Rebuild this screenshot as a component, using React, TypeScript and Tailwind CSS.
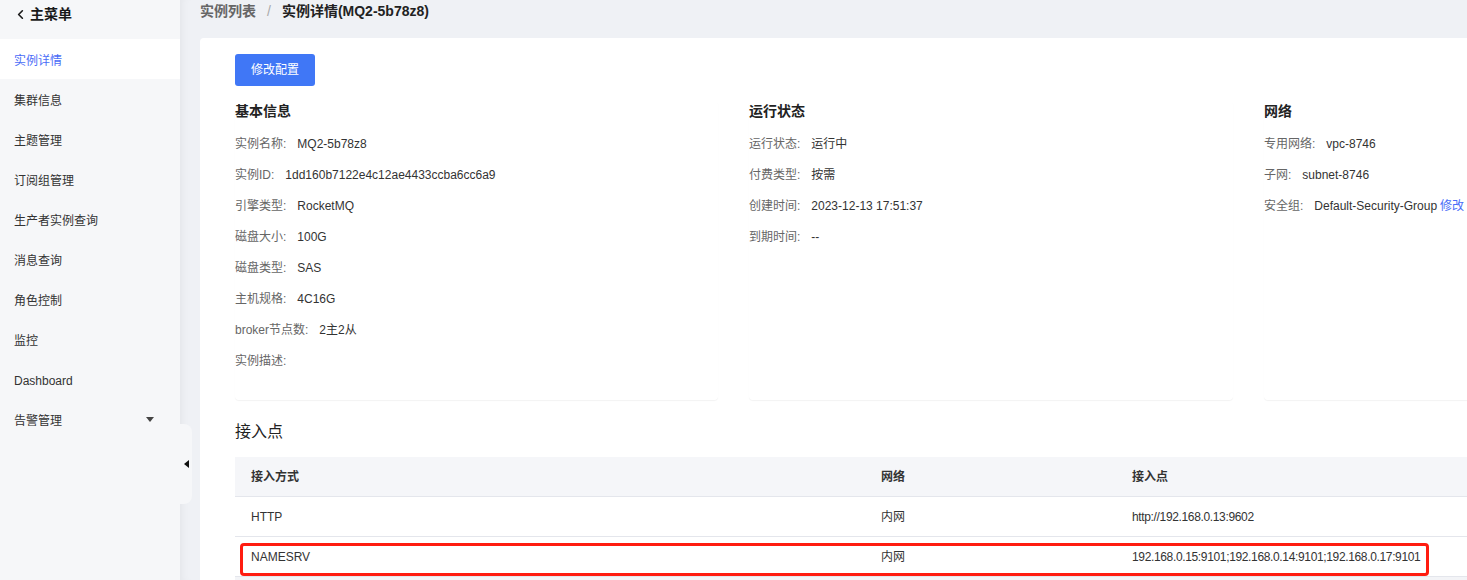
import { ChevronLeft } from "lucide-react"

const menu = [
  "实例详情",
  "集群信息",
  "主题管理",
  "订阅组管理",
  "生产者实例查询",
  "消息查询",
  "角色控制",
  "监控",
  "Dashboard",
  "告警管理",
]

type Field = { label: string; value: string; link?: string }

const sections: { title: string; fields: Field[] }[] = [
  {
    title: "基本信息",
    fields: [
      { label: "实例名称:", value: "MQ2-5b78z8" },
      { label: "实例ID:", value: "1dd160b7122e4c12ae4433ccba6cc6a9" },
      { label: "引擎类型:", value: "RocketMQ" },
      { label: "磁盘大小:", value: "100G" },
      { label: "磁盘类型:", value: "SAS" },
      { label: "主机规格:", value: "4C16G" },
      { label: "broker节点数:", value: "2主2从" },
      { label: "实例描述:", value: "" },
    ],
  },
  {
    title: "运行状态",
    fields: [
      { label: "运行状态:", value: "运行中" },
      { label: "付费类型:", value: "按需" },
      { label: "创建时间:", value: "2023-12-13 17:51:37" },
      { label: "到期时间:", value: "--" },
    ],
  },
  {
    title: "网络",
    fields: [
      { label: "专用网络:", value: "vpc-8746" },
      { label: "子网:", value: "subnet-8746" },
      { label: "安全组:", value: "Default-Security-Group", link: "修改" },
    ],
  },
]

const endpoints = [
  { type: "HTTP", net: "内网", addr: "http://192.168.0.13:9602" },
  { type: "NAMESRV", net: "内网", addr: "192.168.0.15:9101;192.168.0.14:9101;192.168.0.17:9101", marked: true },
]

export default function App() {
  return (
    <div
      className="flex w-[1467px] h-[580px] overflow-hidden bg-[#eff1f5] text-[#333]"
      style={{ fontFamily: '"Liberation Sans", "Noto Sans CJK SC", sans-serif' }}
    >
      {/* sidebar */}
      <aside className="relative w-[180px] shrink-0 bg-[#f6f7f9]">
        <div className="h-[39px] flex items-start pt-[4px] pl-[13px] gap-[2px] text-[14px] font-bold text-[#1a1a1a]">
          <ChevronLeft size={15} strokeWidth={2.6} className="mt-[3px]" />
          <span className="leading-[20px]">主菜单</span>
        </div>
        <nav className="flex flex-col">
          {menu.map((item, i) => (
            <div
              key={item}
              className={
                i === 0
                  ? "h-[40px] flex items-center pt-[4px] pl-[14px] text-[12px] bg-white text-[#4a6cf7]"
                  : "h-[40px] flex items-center justify-between pt-[4px] pl-[14px] pr-[26px] text-[12px] text-[#333]"
              }
            >
              <span>{item}</span>
              {item === "告警管理" && (
                <svg width="8" height="5" viewBox="0 0 8 5" className="-mt-[4px]">
                  <polygon points="0,0 8,0 4,5" fill="#444" />
                </svg>
              )}
            </div>
          ))}
        </nav>
        {/* collapse tab */}
        <div className="absolute left-full top-[424px] w-[12px] h-[80px] rounded-r-[8px] bg-[#f6f7f9] flex items-center justify-center">
          <svg width="5" height="8" viewBox="0 0 5 8">
            <polygon points="5,0 5,8 0,4" fill="#111" />
          </svg>
        </div>
      </aside>

      {/* main */}
      <main className="flex-1 min-w-0 pl-5 shadow-[inset_8px_0_8px_-6px_rgba(0,0,0,0.05)]">
        <div className="h-[22px] flex items-center text-[14px] font-semibold">
          <span className="text-[#666]">实例列表</span>
          <span className="mx-[11px] text-[#aaa] font-normal">/</span>
          <span className="text-[#222] font-bold">实例详情(MQ2-5b78z8)</span>
        </div>

        <div className="mt-4 w-[1620px] bg-white rounded-tl-[4px] pl-[35px] pt-4">
          <button className="h-8 w-20 rounded-[3px] bg-[#4077f6] text-white text-[12px]">修改配置</button>

          <div className="mt-[15px] grid grid-cols-[483px_484px_483px] gap-x-[31px]">
            {sections.map((s) => (
              <div key={s.title} className="rounded-[4px] pb-6 shadow-[0_1px_1px_rgba(0,0,0,0.05)]">
                <div className="h-[20px] leading-[20px] text-[14px] font-bold text-[#222]">{s.title}</div>
                <div className="mt-[7px]">
                  {s.fields.map((f) => (
                    <div key={f.label} className="h-[31px] flex items-center text-[12px]">
                      <span className="text-[#666] mr-[11px]">{f.label}</span>
                      <span className="text-[#333]">{f.value}</span>
                      {f.link && <span className="ml-[3px] text-[#4a6cf7]">{f.link}</span>}
                    </div>
                  ))}
                </div>
              </div>
            ))}
          </div>

          <div className="mt-5 h-[24px] leading-[24px] text-[16px] text-[#222]">接入点</div>

          <div className="mt-[13px] w-[1550px]">
            <div className="h-10 grid grid-cols-[646px_251px_1fr] items-center bg-[#f5f6f9] border-b border-[#e4e6ec] text-[12px] font-bold text-[#333]">
              <span className="pl-4">接入方式</span>
              <span>网络</span>
              <span>接入点</span>
            </div>
            {endpoints.map((e) => (
              <div
                key={e.type}
                className="relative h-10 grid grid-cols-[646px_251px_1fr] items-center border-b border-[#e4e6ec] text-[12px] text-[#333]"
              >
                <span className="pl-4">{e.type}</span>
                <span>{e.net}</span>
                <span className="tracking-[-0.35px]">{e.addr}</span>
                {e.marked && (
                  <div className="absolute left-[5px] top-[6px] w-[1189px] h-[33px] border-[3px] border-[#ff1c10] rounded-[4px]" />
                )}
              </div>
            ))}
            <div className="h-[6px] bg-[#f3f4f7]" />
          </div>
        </div>
      </main>
    </div>
  )
}
